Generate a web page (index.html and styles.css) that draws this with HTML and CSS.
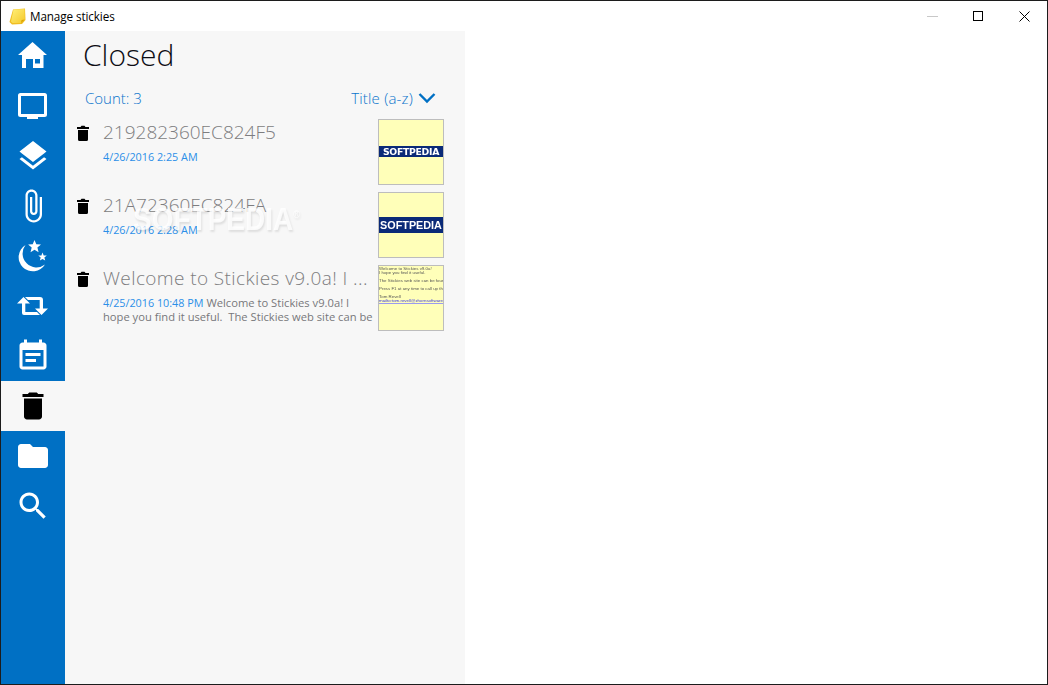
FILE: index.html
```html
<!DOCTYPE html>
<html lang="en">
<head>
<meta charset="utf-8">
<title>Manage stickies</title>
<link rel="stylesheet" href="styles.css">
</head>
<body>
<div class="window">
  <header class="titlebar">
    <svg class="app-icon" viewBox="0 0 17 17"><defs><linearGradient id="note" x1="0" y1="0" x2="1" y2="1"><stop offset="0" stop-color="#fff07a"/><stop offset="1" stop-color="#f5c92c"/></linearGradient></defs><path d="M4 1.500 16 .5 16.500 12 13 16 3 16.500 .5 14z" fill="#f0bd22"/><path d="M4.500 1.500 15.500 1 15.800 11.500 12 15 3.500 15 2 13.500z" fill="url(#note)"/><path d="M12 15l3.800-3.500-3.200.5z" fill="#d9a200"/></svg>
    <span class="app-title">Manage stickies</span>
    <div class="controls">
      <span class="ctl"><svg viewBox="0 0 11 11"><path d="M0 5.500h11" stroke="#c8c8c8"/></svg></span>
      <span class="ctl"><svg viewBox="0 0 11 11"><rect x=".5" y=".5" width="9" height="9" fill="none" stroke="#000"/></svg></span>
      <span class="ctl"><svg viewBox="0 0 11 11"><path d="M.5.500l10 10M10.500.500l-10 10" stroke="#000"/></svg></span>
    </div>
  </header>
  <div class="body">
    <nav class="sidebar">
      <div class="nav-item"><svg class="ico32" viewBox="0 0 32 32"><path fill-rule="evenodd" d="M15.500 2 30 15h-3.500v13H5V15H1zM9 19v9h7v-9zm9 0v4.500h5V19z"/></svg></div>
      <div class="nav-item"><svg class="ico32" viewBox="0 0 32 32"><path fill-rule="evenodd" d="M3.500 3h24a2.500 2.500 0 0 1 2.500 2.500v19a2.500 2.500 0 0 1-2.500 2.500H21v2H10v-2H3.500A2.500 2.500 0 0 1 1 24.500v-19A2.500 2.500 0 0 1 3.500 3zM4 6v18h23V6z"/></svg></div>
      <div class="nav-item"><svg class="ico" viewBox="0 0 24 24"><path d="M11.990 18.540l-7.370-5.730L3 14.070l9 7 9-7-1.630-1.270-7.380 5.740zM12 16l7.360-5.730L21 9l-9-7-9 7 1.630 1.270L12 16z"/></svg></div>
      <div class="nav-item"><svg class="ico" viewBox="0 0 24 24"><path d="M16.500 6v11.500c0 2.210-1.790 4-4 4s-4-1.790-4-4V5c0-1.380 1.120-2.500 2.500-2.500s2.500 1.120 2.500 2.500v10.500c0 .55-.45 1-1 1s-1-.45-1-1V6H10v9.500c0 1.380 1.120 2.500 2.500 2.500s2.500-1.120 2.500-2.500V5c0-2.210-1.790-4-4-4S7 2.790 7 5v12.500c0 3.040 2.460 5.500 5.500 5.500s5.500-2.460 5.500-5.500V6h-1.500z"/></svg></div>
      <div class="nav-item"><svg class="ico32" viewBox="0 0 32 32"><path d="M8.500 5A14.200 14.200 0 1 0 28 24.500 13.900 13.900 0 0 1 8.500 5z"/><path d="M17.500 0l1.800 4.300 4.700.3-3.600 3 1.200 4.600-4.100-2.500-4 2.500 1.200-4.600-3.600-3 4.600-.3zM25.500 12.500l1.200 2.900 3.100.2-2.400 2 .8 3-2.700-1.600-2.600 1.600.8-3-2.400-2 3.100-.2z"/></svg></div>
      <div class="nav-item"><svg class="ico32" viewBox="0 0 32 32"><path d="M6.500 7 13 13.500H8.300V22H20l3 3H7A2 2 0 0 1 5 23V13.500H0zM24.500 25 18 18.500h4.700V10H11L8 7h15a3 3 0 0 1 3 3v8.500h5z"/></svg></div>
      <div class="nav-item"><svg class="ico" viewBox="0 0 24 24"><path d="M17 10H7v2h10v-2zm2-7h-1V1h-2v2H8V1H6v2H5c-1.110 0-1.990.9-1.990 2L3 19c0 1.100.89 2 2 2h14c1.100 0 2-.9 2-2V5c0-1.100-.9-2-2-2zm0 16H5V8h14v11zm-5-5H7v2h7v-2z"/></svg></div>
      <div class="nav-item selected"><svg class="ico" viewBox="0 0 24 24"><path d="M6 19c0 1.100.9 2 2 2h8c1.100 0 2-.9 2-2V7H6v12zM19 4h-3.500l-1-1h-5l-1 1H5v2h14V4z"/></svg></div>
      <div class="nav-item"><svg class="ico" viewBox="0 0 24 24"><path d="M10 4H4c-1.100 0-1.990.9-1.990 2L2 18c0 1.100.9 2 2 2h16c1.100 0 2-.9 2-2V8c0-1.100-.9-2-2-2h-8l-2-2z"/></svg></div>
      <div class="nav-item"><svg class="ico" viewBox="0 0 24 24"><path d="M15.500 14h-.79l-.28-.27C15.410 12.590 16 11.110 16 9.500 16 5.910 13.090 3 9.500 3S3 5.910 3 9.500 5.910 16 9.500 16c1.610 0 3.090-.59 4.230-1.570l.27.28v.79l5 4.990L20.490 19l-4.990-5zm-6 0C7.010 14 5 11.990 5 9.500S7.010 5 9.500 5 14 7.010 14 9.500 11.990 14 9.500 14z"/></svg></div>
    </nav>
    <main class="panel">
      <h1 class="heading">Closed</h1>
      <div class="toolbar">
        <span class="count">Count: 3</span>
        <span class="sort">Title (a-z)<svg class="chev" viewBox="0 0 18 12"><path d="M1.500 2 9 9.500 16.500 2" fill="none" stroke="#0070c4" stroke-width="2.400"/></svg></span>
      </div>
      <ul class="list">
        <li class="row">
          <svg class="del" viewBox="0 0 12 16"><path d="M1 5h10v9.500a1.500 1.500 0 0 1-1.500 1.500h-7A1.500 1.500 0 0 1 1 14.500zM0 2h3.500L4.500 .8h3L8.500 2H12v2H0z"/></svg>
          <div class="info">
            <div class="title">219282360EC824F5</div>
            <div class="meta"><span class="date">4/26/2016 2:25 AM</span></div>
          </div>
          <div class="thumb"><div class="band small">SOFTPEDIA</div></div>
        </li>
        <li class="row">
          <svg class="del" viewBox="0 0 12 16"><path d="M1 5h10v9.500a1.500 1.500 0 0 1-1.500 1.500h-7A1.500 1.500 0 0 1 1 14.500zM0 2h3.500L4.500 .8h3L8.500 2H12v2H0z"/></svg>
          <div class="info">
            <div class="title">21A72360EC824FA</div>
            <div class="meta"><span class="date">4/26/2016 2:28 AM</span></div>
          </div>
          <div class="thumb"><div class="band large">SOFTPEDIA</div></div>
        </li>
        <li class="row">
          <svg class="del" viewBox="0 0 12 16"><path d="M1 5h10v9.500a1.500 1.500 0 0 1-1.500 1.500h-7A1.500 1.500 0 0 1 1 14.500zM0 2h3.500L4.500 .8h3L8.500 2H12v2H0z"/></svg>
          <div class="info">
            <div class="title wide">Welcome to Stickies v9.0a! I ...</div>
            <div class="meta"><span class="date">4/25/2016 10:48 PM</span> Welcome to Stickies v9.0a! I hope you find it useful.&nbsp; The Stickies web site can be</div>
          </div>
          <div class="thumb note">
            <p>Welcome to Stickies v9.0a!<br>I hope you find it useful.</p>
            <p>The Stickies web site can be found at</p>
            <p>Press F1 at any time to call up the help</p>
            <p>Tom Revell<br><a class="mail">mailto:tom.revell@zhornsoftware.co.uk</a></p>
          </div>
        </li>
      </ul>
      <div class="watermark">SOFTPEDIA<sup>®</sup></div>
    </main>
  </div>
</div>
</body>
</html>
```
FILE: styles.css
```css
* { box-sizing: border-box; }
html, body { margin: 0; height: 100%; }
body { font-family: "Open Sans", "Liberation Sans", sans-serif; background: #fff; overflow: hidden; }
.window { width: 1048px; height: 685px; border: 1px solid #1c1c1c; display: flex; flex-direction: column; background: #fff; }

.titlebar { height: 30px; flex: none; display: flex; align-items: center; padding-left: 8px; }
.app-icon { width: 17px; height: 17px; margin-right: 4px; }
.app-title { font-size: 11.700px; color: #000; letter-spacing: -.1px; }
.controls { margin-left: auto; display: flex; }
.ctl { width: 46px; height: 29px; display: flex; align-items: center; justify-content: center; }
.ctl svg { width: 11px; height: 11px; }

.body { flex: 1; display: flex; min-height: 0; }
.sidebar { width: 64px; flex: none; background: #0070c4; }
.nav-item { height: 50px; display: flex; align-items: center; justify-content: center; }
.nav-item svg { fill: #fff; }
.nav-item .ico { width: 36px; height: 36px; }
.nav-item .ico32 { width: 32px; height: 32px; }
.nav-item.selected { background: #f7f7f7; }
.nav-item.selected svg { fill: #000; }

.panel { width: 400px; flex: none; background: #f7f7f7; position: relative; padding-top: 3px; }
.heading { margin: 0 0 0 18px; font-size: 30px; line-height: 42px; font-weight: 300; color: #0d0d14; }
.toolbar { display: flex; justify-content: space-between; align-items: center; margin: 10px 29px 0 20px; height: 24px; font-size: 15px; font-weight: 300; color: #0a74cc; }
.sort { display: flex; align-items: center; gap: 5px; letter-spacing: .2px; }
.chev { width: 18px; height: 12px; }

.list { list-style: none; margin: 9px 0 0; padding: 0 0 0 12px; }
.row { display: flex; height: 73px; }
.del { width: 12px; height: 16px; margin-top: 6px; flex: none; }
.info { width: 275px; margin-left: 14px; flex: none; }
.title { font-size: 19px; line-height: 28px; margin-top: -1px; font-weight: 300; color: #7d7d80; white-space: nowrap; }
.title.wide { letter-spacing: .4px; }
.meta { font-size: 11.200px; line-height: 14px; margin-top: 4px; color: #77777b; height: 28px; overflow: hidden; }
.date { color: #2b8fe8; font-size: 10.800px; }
.thumb { width: 66px; height: 66px; flex: none; background: #ffffb9; border: 1px solid #bdbdbd; display: flex; align-items: center; overflow: hidden; }
.band { width: 100%; background: #0a2a78; color: #fff; font-weight: 700; text-align: center; white-space: nowrap; filter: blur(.25px); }
.band.small { height: 11px; line-height: 11px; margin-bottom: 2px; font-size: 9.300px; font-family: "DejaVu Sans", sans-serif; letter-spacing: -.3px; }
.band.large { height: 16px; line-height: 16px; font-size: 10.800px; font-family: "Liberation Sans", sans-serif; }
.note { display: block; padding: 1px 0 0 0; font-size: 4.400px; line-height: 4px; color: #555; white-space: nowrap; font-family: "Liberation Sans", sans-serif; filter: blur(.3px); }
.note p { margin: 0 0 4px; }
.mail { color: #3a3ae0; text-decoration: underline; text-decoration-color: #9a9af0; text-decoration-thickness: .5px; }

.watermark { position: absolute; left: 68px; top: 173px; font-family: "Liberation Sans", sans-serif; font-size: 28px; font-weight: 700; color: rgba(255,255,255,.8); text-shadow: 1px 1px 2px rgba(0,0,0,.1); transform: scaleY(1.15); }
.watermark sup { font-size: 9px; font-weight: 400; }
```
